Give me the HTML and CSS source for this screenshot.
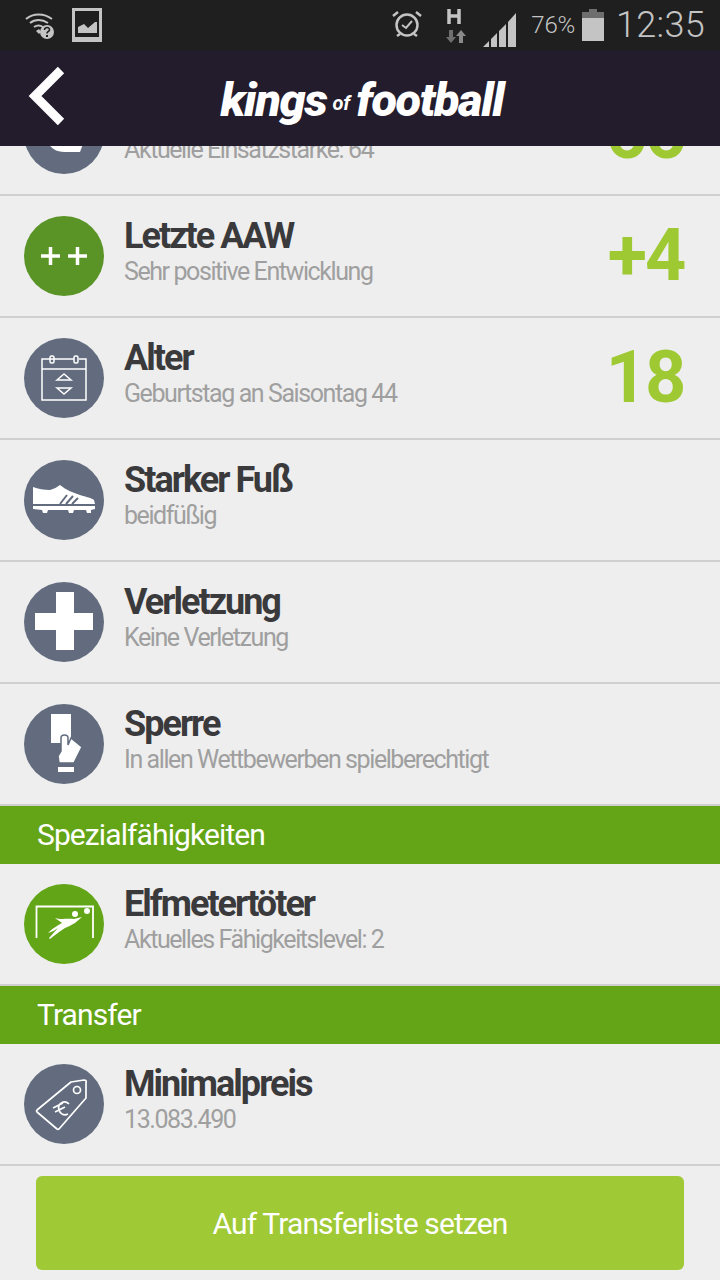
FILE: index.html
```html
<!DOCTYPE html>
<html lang="de">
<head>
<meta charset="utf-8">
<title>kings of football</title>
<link rel="stylesheet" href="styles.css">
</head>
<body>
<div class="page">
  <div class="status">
    <div class="status-left">
      <svg class="si-wifi" width="30" height="28" viewBox="0 0 30 28"><g fill="none" stroke="#c4c4c4" stroke-width="2"><path d="M1 7C8 1 19 1 27 7"/><path d="M5 11C10 7 17 7 23 11"/><path d="M9 15C12 13 15 13 18 15"/></g><path d="M11 19l3-2 2 3-2 2z" fill="#c4c4c4"/><circle cx="22" cy="20" r="7" fill="#c4c4c4"/><path d="M19.500 18c0-3.500 5.500-3 5 0-.3 1.500-2.500 1.500-2.500 3.500" fill="none" stroke="#1f1f1f" stroke-width="1.600"/><rect x="21" y="23" width="2" height="2" fill="#1f1f1f"/></svg>
      <svg class="si-pic" width="30" height="34" viewBox="0 0 30 34"><rect width="30" height="34" fill="#c4c4c4"/><rect x="3" y="3" width="24" height="26" fill="#1f1f1f"/><path d="M6 25v-6l6-3 4 4 7-6 2 0v11z" fill="#c4c4c4"/></svg>
    </div>
    <div class="status-right">
      <svg width="30" height="30" viewBox="0 0 30 30"><circle cx="15" cy="15" r="10.500" fill="none" stroke="#c4c4c4" stroke-width="2.500"/><path d="M10 15l4 3 6-7" fill="none" stroke="#c4c4c4" stroke-width="2"/><path d="M1 6l5-4M29 6l-5-4M5 26l3-2M25 26l-3-2" stroke="#c4c4c4" stroke-width="2.500"/></svg>
      <svg class="si-h" width="20" height="34" viewBox="0 0 20 34"><path d="M3 0v15M13 0v15M3 7h10" stroke="#c4c4c4" stroke-width="3.500" fill="none"/><path d="M3 21h4v7h3l-5 6-5-6h3z" fill="#6e6e6e"/><path d="M13 34h4v-7h3l-5-6-5 6h3z" fill="#8a8a8a"/></svg>
      <svg class="si-signal" width="34" height="34" viewBox="0 0 34 34"><path d="M0 34L6 28V34zM8 26l6-6V34H8zM16 18l7-7V34H16zM25 9l8-9V34H25z" fill="#c4c4c4"/></svg>
      <span class="pct">76%</span>
      <svg class="si-batt" width="22" height="32" viewBox="0 0 22 32"><path d="M7 0h8v3h7v7H0V3h7z" fill="#6e6e6e"/><rect y="9" width="22" height="23" fill="#c4c4c4"/></svg>
      <span class="time">12:35</span>
    </div>
  </div>
  <header class="bar">
    <svg class="back" width="38" height="60" viewBox="0 0 38 60"><path d="M33 4L7 30L33 56" fill="none" stroke="#fff" stroke-width="9"/></svg>
    <div class="logo"><span>kings</span><small>of</small><span>football</span></div>
  </header>
  <main class="scroll">
    <div class="list">
      <div class="row">
        <div class="ico">
          <svg width="80" height="80" viewBox="0 0 80 80"><path d="M23 40V47C26 54 32 58 40 58H56L59 50V40z" fill="#fff"/></svg>
        </div>
        <div class="txt"><div class="t">Einsatz</div><div class="s">Aktuelle Einsatzstärke: 64</div></div>
        <div class="num">66</div>
      </div>
      <div class="row">
        <div class="ico dark-green">
          <svg width="80" height="80" viewBox="0 0 80 80"><path d="M17 40h19M26.500 31v18M44 40h19M53.500 31v18" stroke="#fff" stroke-width="3.500" fill="none"/></svg>
        </div>
        <div class="txt"><div class="t">Letzte AAW</div><div class="s">Sehr positive Entwicklung</div></div>
        <div class="num">+4</div>
      </div>
      <div class="row">
        <div class="ico">
          <svg width="80" height="80" viewBox="0 0 80 80"><g fill="none" stroke="#fff" stroke-width="1.500"><path d="M18 21H50M55 21H62V62H18V21H24M33 21H50"/><path d="M18 31H62"/><rect x="26" y="18" width="4" height="7" rx="1.500"/><rect x="50" y="18" width="4" height="7" rx="1.500"/><path d="M33 42L40 36L47 42ZM33 50L40 56L47 50Z"/></g></svg>
        </div>
        <div class="txt"><div class="t">Alter</div><div class="s">Geburtstag an Saisontag 44</div></div>
        <div class="num">18</div>
      </div>
      <div class="row">
        <div class="ico">
          <svg width="80" height="80" viewBox="0 0 80 80"><path d="M9 27C14 29 20 30 26 30C30 29 33 27 36 25C42 30 50 33 56 35C62 37 68 38 70 40L71 44H9z" fill="#fff"/><path d="M36 44L43 35M42 44L49 36M48 44L54 38" stroke="#626c7e" stroke-width="2"/><path d="M9 46H71V49L67 50V53H63L62 50H50L49 53H45L44 50H24L23 53H19L18 50L9 49z" fill="#fff"/></svg>
        </div>
        <div class="txt"><div class="t">Starker Fuß</div><div class="s">beidfüßig</div></div>
      </div>
      <div class="row">
        <div class="ico">
          <svg width="80" height="80" viewBox="0 0 80 80"><path d="M32 10H50V31H69V48H50V68H32V48H11V31H32z" fill="#fff"/></svg>
        </div>
        <div class="txt"><div class="t">Verletzung</div><div class="s">Keine Verletzung</div></div>
      </div>
      <div class="row">
        <div class="ico">
          <svg width="80" height="80" viewBox="0 0 80 80"><rect x="27" y="10" width="20" height="29" fill="#fff"/><path d="M37 34C37 30 44 30 44 34V41L47 34L58 43L50 59H35L34 52L37 47z" fill="#fff" stroke="#626c7e" stroke-width="1.500"/><path d="M34 63H50V68H34z" fill="#fff"/></svg>
        </div>
        <div class="txt"><div class="t">Sperre</div><div class="s">In allen Wettbewerben spielberechtigt</div></div>
      </div>
      <div class="sec">Spezialfähigkeiten</div>
      <div class="row">
        <div class="ico green">
          <svg width="80" height="80" viewBox="0 0 80 80"><path d="M12.500 54V22.500H69V54" fill="none" stroke="#fff" stroke-width="1.800"/><circle cx="63" cy="27" r="3" fill="#fff"/><circle cx="51" cy="30" r="3" fill="#fff"/><path d="M31 34C38 36 44 34 50 35L58 33L51 39C47 41 44 43 41 44C36 47 31 51 26 55L25 54L34 44C31 46 28 48 24 49C29 44 34 41 38 39C36 37 33 36 31 34z" fill="#fff"/></svg>
        </div>
        <div class="txt"><div class="t">Elfmetertöter</div><div class="s">Aktuelles Fähigkeitslevel: 2</div></div>
      </div>
      <div class="sec">Transfer</div>
      <div class="row">
        <div class="ico">
          <svg width="80" height="80" viewBox="0 0 80 80"><path d="M47 18L60 16Q63 16 62 19L62 34L35 65Q34 66 33 65L13 48Q12 47 13 46z" fill="none" stroke="#fff" stroke-width="1.700" stroke-linejoin="round"/><circle cx="53" cy="26" r="3.500" fill="none" stroke="#fff" stroke-width="1.700"/><path d="M45 40C40 35 33 40 35 46C36 50 40 52 44 50M29 44L39 39M31 48L41 43" fill="none" stroke="#fff" stroke-width="1.700"/></svg>
        </div>
        <div class="txt"><div class="t">Minimalpreis</div><div class="s">13.083.490</div></div>
      </div>
    </div>
  </main>
  <footer class="foot"><button class="cta">Auf Transferliste setzen</button></footer>
</div>
</body>
</html>
```
FILE: styles.css
```css
* { box-sizing: border-box; }
html, body { margin: 0; padding: 0; }
body { background: #eeeeee; font-family: Roboto, "Noto Sans", sans-serif; }
.page { width: 720px; height: 1280px; display: flex; flex-direction: column; overflow: hidden; }

.status { height: 50px; flex: none; background: #1f1f1f; display: flex; justify-content: space-between; align-items: center; padding: 0 15px 0 25px; color: #c4c4c4; }
.status-left { display: flex; align-items: center; gap: 17px; }
.si-wifi { margin-top: 2px; }
.status-right { display: flex; align-items: center; }
.si-h { margin-left: 24px; margin-top: 2px; }
.si-signal { margin-left: 17px; margin-top: 9px; }
.pct { margin-left: 14px; font-size: 24px; font-weight: 300; letter-spacing: -0.2px; }
.si-batt { margin-left: 7px; }
.time { margin-left: 12px; font-size: 36px; font-weight: 300; letter-spacing: 0.3px; }

.bar { height: 96px; flex: none; background: #231c2c; position: relative; display: flex; align-items: center; justify-content: center; z-index: 1; }
.back { position: absolute; left: 28px; top: 16px; }
.logo { color: #fff; font-family: Roboto, sans-serif; font-weight: 900; font-style: italic; font-size: 47px; line-height: 50px; letter-spacing: -1.400px; display: flex; align-items: baseline; gap: 6px; margin-left: 4px; padding-top: 3px; }
.logo small { font-size: 20px; line-height: 20px; letter-spacing: 0; font-weight: 700; align-self: center; margin-top: 6px; }

.scroll { flex: 1; min-height: 0; overflow: hidden; }
.list { margin-top: -72px; }
.row { height: 122px; display: flex; align-items: flex-start; padding: 20px 36px 0 24px; border-bottom: 2px solid #cfcfcf; }
.ico { width: 80px; height: 80px; border-radius: 50%; background: #626c7e; flex: none; }
.ico svg { display: block; }
.ico.dark-green { background: #5a9426; }
.ico.green { background: #62a517; }
.txt { margin-left: 20px; flex: 1; min-width: 0; }
.t { font-size: 36px; line-height: 40px; font-weight: 700; color: #3a3a3c; letter-spacing: -1.980px; }
.s { font-size: 25px; line-height: 30px; padding-top: 1px; font-weight: 400; color: #9f9f9f; letter-spacing: -1.420px; }
.num { font-size: 72px; line-height: 80px; font-weight: 700; color: #9fc933; letter-spacing: -2.200px; }
.sec { height: 58px; background: #63a516; color: #fff; font-size: 30px; line-height: 58px; padding-left: 37px; letter-spacing: -0.900px; }

.foot { height: 114px; flex: none; padding: 10px 36px; }
.cta { display: block; width: 100%; height: 94px; border: 0; border-radius: 6px; background: #a0c936; color: #fff; font-family: Roboto, sans-serif; font-size: 30px; letter-spacing: -0.870px; }
```
